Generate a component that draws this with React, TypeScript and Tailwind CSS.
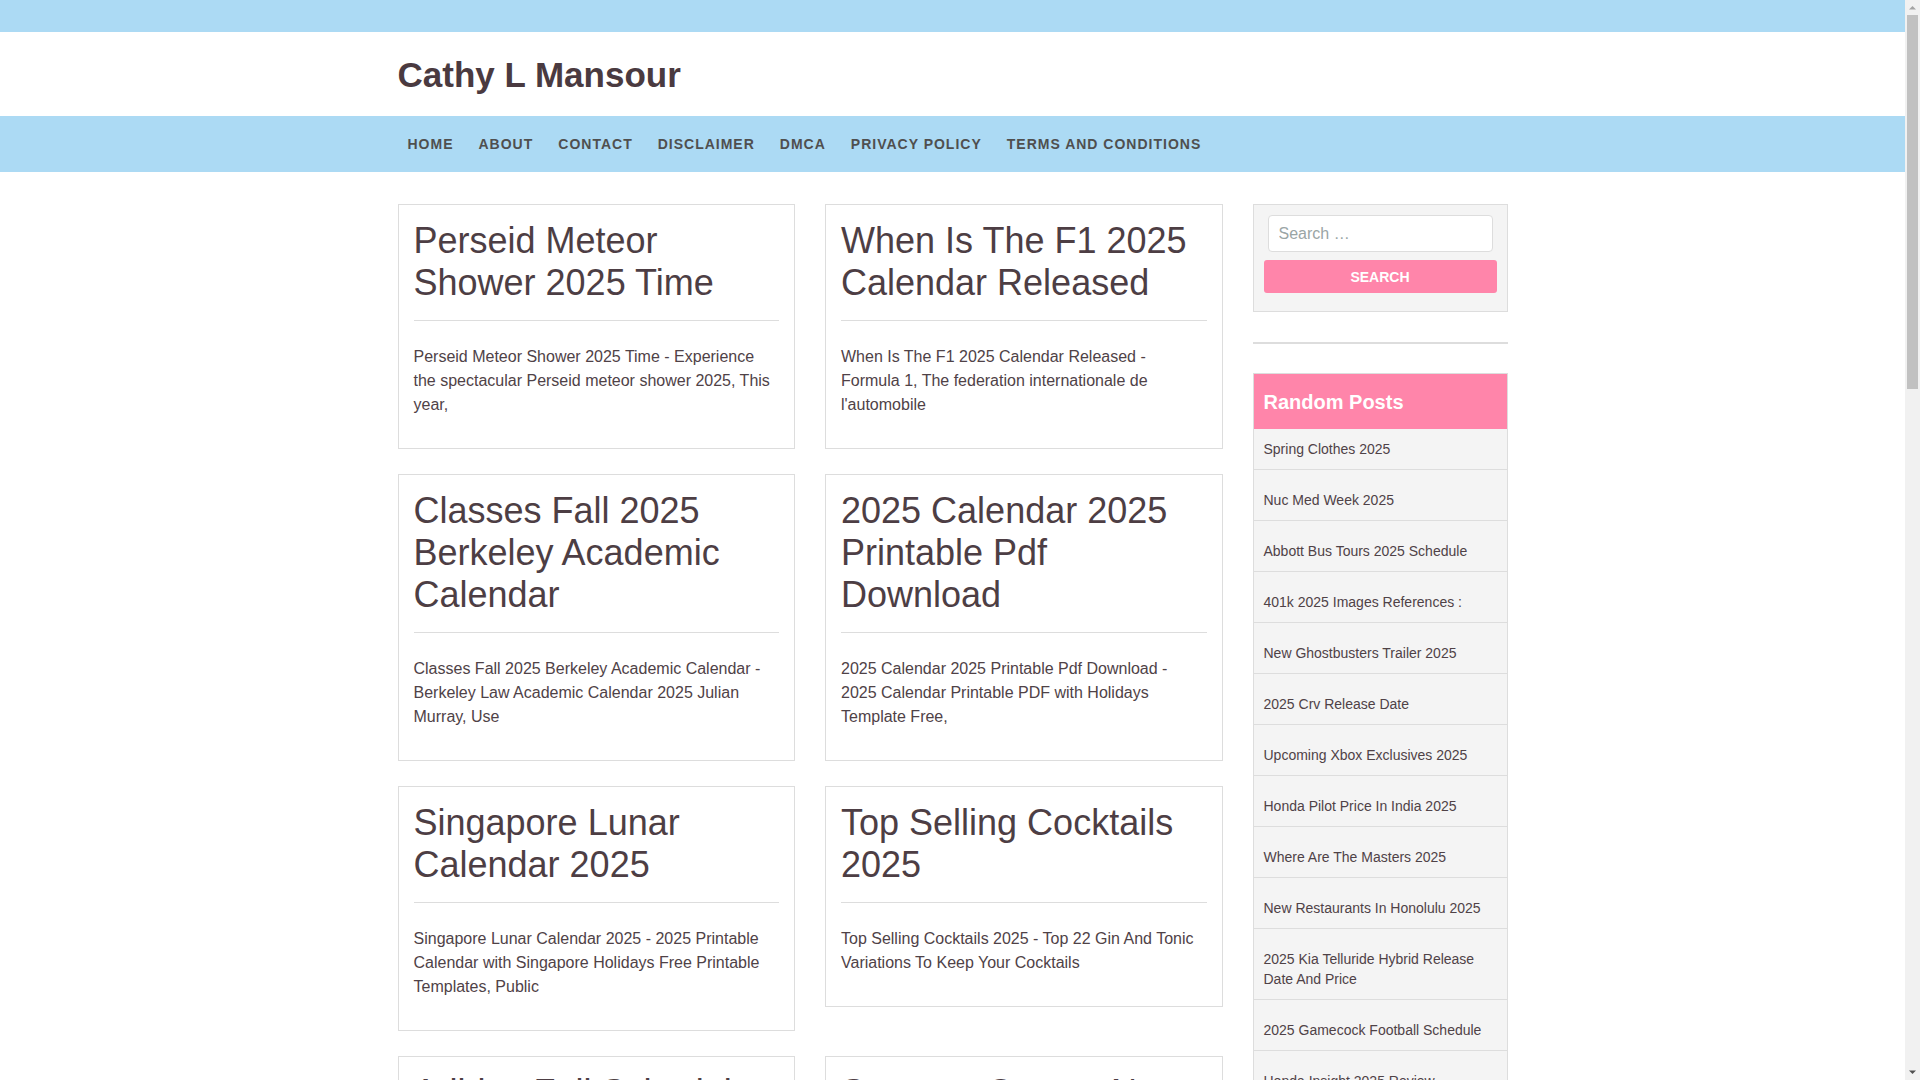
const posts = [
  {
    title: 'Perseid Meteor Shower 2025 Time',
    excerpt:
      'Perseid Meteor Shower 2025 Time - Experience the spectacular Perseid meteor shower 2025, This year,',
  },
  {
    title: 'When Is The F1 2025 Calendar Released',
    excerpt:
      "When Is The F1 2025 Calendar Released - Formula 1, The federation internationale de l'automobile",
  },
  {
    title: 'Classes Fall 2025 Berkeley Academic Calendar',
    excerpt:
      'Classes Fall 2025 Berkeley Academic Calendar - Berkeley Law Academic Calendar 2025 Julian Murray, Use',
  },
  {
    title: '2025 Calendar 2025 Printable Pdf Download',
    excerpt:
      '2025 Calendar 2025 Printable Pdf Download - 2025 Calendar Printable PDF with Holidays Template Free,',
  },
  {
    title: 'Singapore Lunar Calendar 2025',
    excerpt:
      'Singapore Lunar Calendar 2025 - 2025 Printable Calendar with Singapore Holidays Free Printable Templates, Public',
  },
  {
    title: 'Top Selling Cocktails 2025',
    excerpt:
      'Top Selling Cocktails 2025 - Top 22 Gin And Tonic Variations To Keep Your Cocktails',
  },
  {
    title: 'Adidas Fall Schedule And Football Calendar 2025',
    excerpt:
      'Adidas Fall Schedule And Football Calendar 2025 - Printable schedule with all the dates, Free',
  },
  {
    title: 'Summer Camps Near Me 2025',
    excerpt: 'Summer Camps Near Me 2025 - The best summer camps for kids this year,',
  },
];

const randomPosts = [
  'Spring Clothes 2025',
  'Nuc Med Week 2025',
  'Abbott Bus Tours 2025 Schedule',
  '401k 2025 Images References :',
  'New Ghostbusters Trailer 2025',
  '2025 Crv Release Date',
  'Upcoming Xbox Exclusives 2025',
  'Honda Pilot Price In India 2025',
  'Where Are The Masters 2025',
  'New Restaurants In Honolulu 2025',
  '2025 Kia Telluride Hybrid Release Date And Price',
  '2025 Gamecock Football Schedule',
  'Honda Insight 2025 Review',
];

const menu = ['Home', 'About', 'Contact', 'Disclaimer', 'DMCA', 'Privacy Policy', 'Terms and Conditions'];

function PostCard({ title, excerpt }: { title: string; excerpt: string }) {
  return (
    <article className="border border-[#dddddd] p-[15px]">
      <h2 className="text-[36px] leading-[42px] font-normal text-[#4d3e44] pb-4 border-b border-[#dddddd]">
        <a href="#">{title}</a>
      </h2>
      <p className="mt-6 mb-4 text-base leading-6 text-[#4f4247]">{excerpt}</p>
    </article>
  );
}

// classic window scrollbar shown at the right edge of the page
function ScrollTrack() {
  return (
    <div className="w-[15px] shrink-0 h-screen bg-[#f1f1f1] flex flex-col items-center">
      <svg width="15" height="15" viewBox="0 0 15 15" className="shrink-0">
        <path d="M4 9.5 L7.5 6 L11 9.5 Z" fill="#a3a3a3" />
      </svg>
      <div className="w-[11px] h-[374px] bg-[#c1c1c1]" />
      <div className="flex-1" />
      <svg width="15" height="15" viewBox="0 0 15 15" className="shrink-0">
        <path d="M4 5.5 L7.5 9 L11 5.5 Z" fill="#505050" />
      </svg>
    </div>
  );
}

export default function App() {
  return (
    <div className="h-screen overflow-hidden flex bg-white font-['Liberation_Sans',Arial,sans-serif] text-[#4d3e44]">
      <div className="flex-1 min-w-0 h-screen overflow-hidden">
        {/* Top strip */}
        <div className="h-8 bg-[#acdaf4]" />

        {/* Header */}
        <header className="h-[84px] bg-white">
          <div className="max-w-[1140px] mx-auto px-[15px] h-full flex items-center">
            <h1 className="text-[35px] font-bold leading-none text-[#4a3a40]">Cathy L Mansour</h1>
          </div>
        </header>

        {/* Navigation */}
        <nav className="h-14 bg-[#acdaf4]">
          <ul className="max-w-[1140px] mx-auto px-[15px] h-full flex items-center">
            {menu.map((item, i) => (
              <li key={item} className={i === 0 ? 'pl-[10px] pr-[12.5px]' : 'px-[12.5px]'}>
                <a href="#" className="text-sm font-bold uppercase tracking-[1px] text-[#4f4f4f]">
                  {item}
                </a>
              </li>
            ))}
          </ul>
        </nav>

        {/* Content */}
        <div className="max-w-[1140px] mx-auto px-[15px] pt-8 pb-10">
          <div className="grid grid-cols-[825px_255px] gap-x-[30px] items-start">
            <main className="grid grid-cols-2 gap-x-[30px] gap-y-[25px] items-start">
              {posts.map((p) => (
                <PostCard key={p.title} {...p} />
              ))}
            </main>

            <aside className="flex flex-col">
              {/* Search */}
              <div className="border border-[#dddddd] bg-[#f4f4f4] pt-[10px] pb-[18px] px-[10px]">
                <input
                  type="search"
                  placeholder="Search …"
                  className="block mx-1 w-[calc(100%-8px)] h-[37px] rounded-[4px] border border-[#dddddd] bg-white px-[10px] text-base text-[#555] placeholder:text-[#9aa5a5] outline-none"
                />
                <button className="mt-2 w-full h-[33px] rounded-[3px] bg-[#ff85aa] text-sm font-bold uppercase text-white">
                  Search
                </button>
              </div>

              <div className="mt-[30px] h-[2px] bg-[#dddddd]" />

              {/* Random posts */}
              <div className="mt-[29px] border border-[#dddddd] bg-[#f4f4f4]">
                <h3 className="h-[55px] flex items-center px-[10px] bg-[#ff85aa] text-[20px] font-bold text-white">
                  Random Posts
                </h3>
                <ul>
                  {randomPosts.map((r, i) => (
                    <li
                      key={r}
                      className={`${i === 0 ? 'pt-[10px]' : 'pt-5'} pb-[10px] px-[10px] border-b border-[#dddddd] text-sm leading-5 text-[#4f4247]`}
                    >
                      <a href="#">{r}</a>
                    </li>
                  ))}
                </ul>
              </div>
            </aside>
          </div>
        </div>
      </div>
      <ScrollTrack />
    </div>
  );
}
